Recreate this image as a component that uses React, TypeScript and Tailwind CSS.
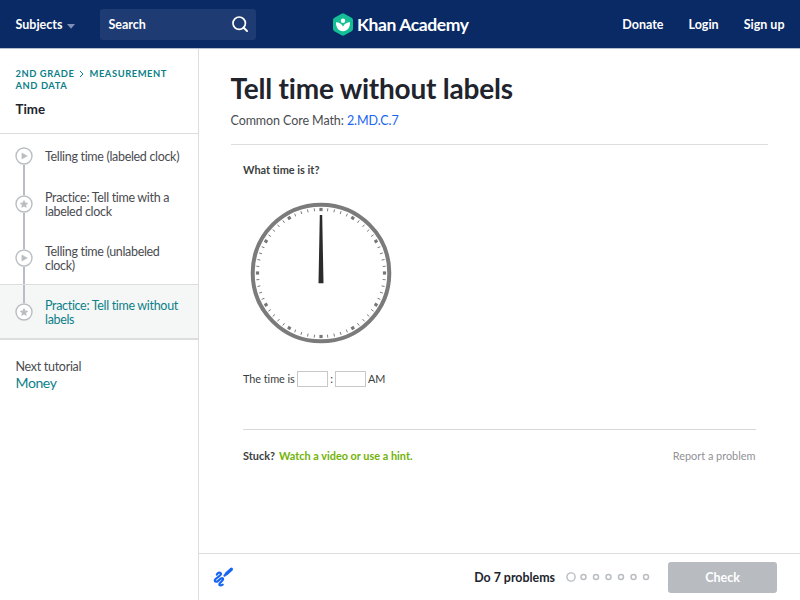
import { ReactNode } from "react";

const lessons = [
  { kind: "video", title: "Telling time (labeled clock)", active: false },
  { kind: "exercise", title: "Practice: Tell time with a labeled clock", active: false },
  { kind: "video", title: "Telling time (unlabeled clock)", active: false },
  { kind: "exercise", title: "Practice: Tell time without labels", active: true },
];

function SearchIcon() {
  return (
    <svg width="18" height="18" viewBox="0 0 18 18" fill="none" stroke="#fff">
      <circle cx="8.200" cy="8.200" r="6.200" strokeWidth="1.700" />
      <path d="M12.500 12.500L16 16" strokeWidth="2" strokeLinecap="round" />
    </svg>
  );
}

function LogoIcon() {
  return (
    <svg width="22" height="23" viewBox="0 0 22 23">
      <path
        d="M9.600.700a2.800 2.800 0 0 1 2.800 0l7.200 4.100A2.800 2.800 0 0 1 21 7.200v8.600a2.800 2.800 0 0 1-1.400 2.400l-7.200 4.100a2.800 2.800 0 0 1-2.800 0l-7.200-4.100A2.800 2.800 0 0 1 1 15.800V7.200a2.800 2.800 0 0 1 1.400-2.400z"
        fill="#14bf96"
      />
      <circle cx="11" cy="7.800" r="2.200" fill="#fff" />
      <path
        d="M11 13.800C9.900 11 7.200 9.300 4 9.300c-.3 5.200 2.600 8.900 7 8.900s7.300-3.700 7-8.900c-3.200 0-5.900 1.700-7 4.500z"
        fill="#fff"
      />
    </svg>
  );
}

function LessonIcon({ kind }: { kind: string }) {
  return (
    <svg width="18" height="18" viewBox="0 0 18 18" className="shrink-0">
      <circle cx="9" cy="9" r="8" fill="#fff" stroke="#babec2" strokeWidth="1.400" />
      {kind === "video" ? (
        <path d="M6.900 5.900v6.200L12.400 9z" fill="#babec2" stroke="#babec2" strokeWidth=".5" strokeLinejoin="round" />
      ) : (
        <path
          d="M9 4.700l1.300 2.800 3 .4-2.200 2.100.5 3L9 11.600 6.400 13l.5-3-2.200-2.100 3-.4z"
          fill="#babec2"
        />
      )}
    </svg>
  );
}

function ScratchpadIcon() {
  return (
    <svg width="22" height="22" viewBox="0 0 22 22" fill="none" stroke="#1865f2" strokeLinecap="round" strokeLinejoin="round">
      <path
        d="M4.800 8.600C5.500 6.300 9 5.700 9 8c0 2.200-6.200 4-6.200 6.400 0 1.900 2 1.500 3.300.4 1.600-1.300 3.900-3.500 4.900-2.200 1.100 1.600-3.600 3.900-3.700 5.600-.1 1.500 1.900 1.400 3.400.4"
        strokeWidth="2.200"
      />
      <path d="M14.400 7.800l5-4.600" strokeWidth="3.200" />
      <path d="M12.500 9.600l.8-.8" strokeWidth="2.200" />
    </svg>
  );
}

function Clock() {
  const marks = Array.from({ length: 60 }, (_, i) => i);
  return (
    <svg width="142" height="142" viewBox="-71 -71 142 142" className="block">
      <circle r="68.300" fill="#fff" stroke="#7b7b7b" strokeWidth="4" />
      {marks.map((i) =>
        i % 5 === 0 ? (
          <rect key={i} x="-1.600" y="-65.100" width="3.200" height="3.200" fill="#777" transform={`rotate(${i * 6})`} />
        ) : (
          <path key={i} d="M0 -65V-62" stroke="#777" strokeWidth=".9" transform={`rotate(${i * 6})`} />
        )
      )}
      <path d="M-1.200 -58H1.200L2.500 10.300H-2.500z" fill="#2b2b2b" />
    </svg>
  );
}

function Answer() {
  return <input className="block h-4 w-[31.500px] border border-[#c8c8c8] bg-white outline-none" />;
}

function NavLink({ children }: { children: ReactNode }) {
  return <a href="#">{children}</a>;
}

export default function App() {
  return (
    <div className="flex h-[600px] w-[800px] flex-col overflow-hidden bg-white font-['Lato',sans-serif] text-[#21242c] [font-variant-ligatures:none]">
      <header className="grid h-[49px] shrink-0 grid-cols-[332px_1fr_auto] items-center border-b border-[#b5bed1] bg-[#0a2a66] bg-clip-padding text-[12.500px] font-bold text-white">
        <div className="flex items-center pl-[15.500px]">
          <a href="#" className="flex items-center gap-[5px] pt-[2px]">
            Subjects
            <svg width="8" height="5" viewBox="0 0 8 5" className="mt-[2px]">
              <path d="M0 0h8L4 4.700z" fill="#7e90b4" />
            </svg>
          </a>
          <div className="ml-[25px] flex h-[31px] w-[156px] items-center justify-between rounded-[3px] bg-[#1f3b73] pr-[7px] pl-2">
            <span className="pt-[2px]">Search</span>
            <SearchIcon />
          </div>
        </div>
        <a href="#" className="flex items-center gap-[3px] text-[17.500px] leading-6 tracking-[-0.400px]">
          <LogoIcon />
          <span className="pt-[2px]">Khan Academy</span>
        </a>
        <nav className="flex gap-[25px] pt-[2px] pr-[15.500px]">
          <NavLink>Donate</NavLink>
          <NavLink>Login</NavLink>
          <NavLink>Sign up</NavLink>
        </nav>
      </header>

      <div className="flex min-h-0 flex-1">
        <aside className="w-[199px] shrink-0 border-r border-[#dcdddf]">
          <div className="h-[85px] border-b border-[#dcdddf] px-[15.500px] pt-[19px]">
            <div className="text-[9.400px] leading-[12px] font-bold tracking-[0.560px] text-[#0c7f89] uppercase">
              2nd grade
              <svg width="5" height="8" viewBox="0 0 5 8" fill="none" className="mx-[5px] inline-block align-[-1px]">
                <path d="M1 1l3 3-3 3" stroke="#0c7f89" strokeWidth="1" />
              </svg>
              Measurement
              <br />
              and data
            </div>
            <h2 className="mt-2 text-[13.300px] leading-[18px] font-bold">Time</h2>
          </div>

          <ul>
            {lessons.map((lesson, i) => (
              <li
                key={lesson.title}
                className={
                  lesson.active
                    ? "flex h-[56px] border-t border-b-2 border-[#dcdddf] bg-[#f5f7f7] text-[#0c7f89]"
                    : i === 0
                      ? "flex h-[43px] text-[#4a4c50]"
                      : i === 1
                        ? "flex h-[54px] text-[#4a4c50]"
                        : "flex h-[53px] text-[#4a4c50]"
                }
              >
                <div className="ml-[15px] flex w-[18px] flex-col items-center">
                  <span className={i === 0 ? "flex-1" : "w-[1.500px] flex-1 bg-[#babec2]"} />
                  <LessonIcon kind={lesson.kind} />
                  <span className={lesson.active ? "flex-1" : "w-[1.500px] flex-1 bg-[#babec2]"} />
                </div>
                <a href="#" className="ml-3 w-[142px] self-center pt-[2px] text-[12.500px] leading-[14px] tracking-[-0.320px]">
                  {lesson.title}
                </a>
              </li>
            ))}
          </ul>

          <div className="px-[15.500px] pt-[19px]">
            <p className="text-[12.500px] leading-4 tracking-[-0.290px] text-[#4a4c50]">Next tutorial</p>
            <a href="#" className="block text-[14px] leading-4 tracking-[-0.400px] text-[#0c7f89]">
              Money
            </a>
          </div>
        </aside>

        <main className="flex min-w-0 flex-1 flex-col">
          <div className="flex-1 pt-[22px] pr-8 pl-[31.500px]">
            <h1 className="text-[28px] leading-[34px] font-bold tracking-[-0.210px]">Tell time without labels</h1>
            <p className="mt-2 text-[12.500px] leading-4 tracking-[-0.080px] text-[#4a4c50]">
              Common Core Math:{" "}
              <a href="#" className="text-[#1865f2]">
                2.MD.C.7
              </a>
            </p>
            <div className="mt-[15px] border-t border-[#dcdddf] px-[12.500px] text-[#3b3e40]">
              <p className="mt-[17px] text-[10.950px] leading-4 font-bold">What time is it?</p>
              <div className="mt-6 ml-[7px]">
                <Clock />
              </div>
              <div className="mt-[27px] flex items-center text-[10.900px] leading-4">
                <span className="mr-[2px] tracking-[-0.050px]">The time is</span>
                <Answer />
                <span className="mx-[2px]">:</span>
                <Answer />
                <span className="ml-[1.500px]">AM</span>
              </div>
              <div className="mt-[42px] flex items-center justify-between border-t border-[#d6d8da] pt-[18px] text-[10.900px] leading-4">
                <p className="font-bold">
                  Stuck?
                  <a href="#" className="ml-1 text-[#71b307]">
                    Watch a video or use a hint.
                  </a>
                </p>
                <a href="#" className="text-[#8f9296]">
                  Report a problem
                </a>
              </div>
            </div>
          </div>

          <footer className="flex h-[47px] shrink-0 items-center border-t border-[#dcdddf] pr-[23px] pl-[13px]">
            <ScratchpadIcon />
            <span className="ml-auto pt-[2px] text-[12.400px] font-bold">Do 7 problems</span>
            <svg width="84" height="10" viewBox="0 0 84 10" fill="none" stroke="#babec2" className="ml-[11px]">
              <circle cx="5" cy="5" r="4.100" strokeWidth="1.400" />
              {[17.500, 30, 42.500, 55, 67.500, 80].map((x) => (
                <circle key={x} cx={x} cy="5" r="2.500" strokeWidth="1.500" />
              ))}
            </svg>
            <button className="ml-[18px] h-[31px] w-[109px] rounded-[3px] bg-[#b8bbc0] pt-[2px] text-[12.500px] font-bold text-white">
              Check
            </button>
          </footer>
        </main>
      </div>
    </div>
  );
}
